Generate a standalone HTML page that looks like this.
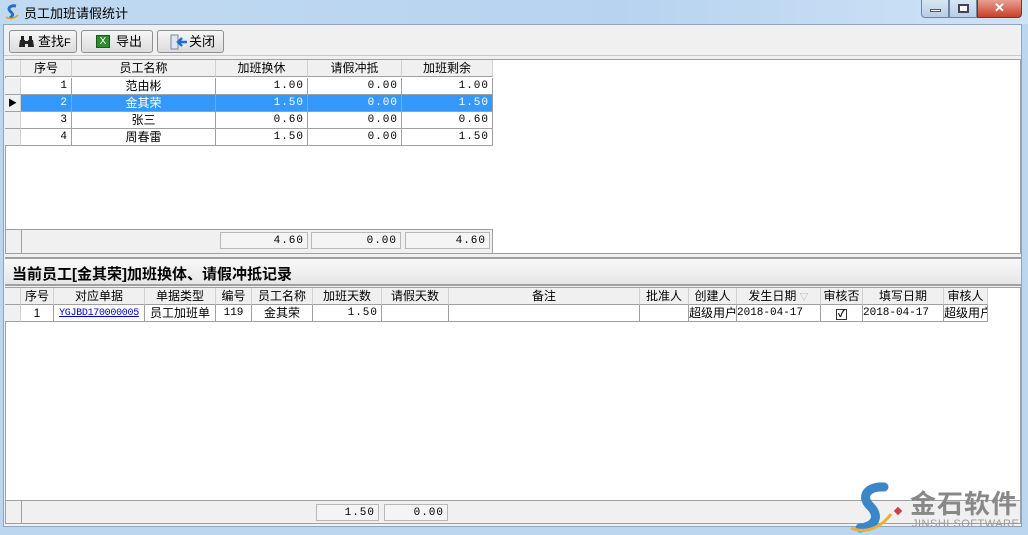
<!DOCTYPE html>
<html><head><meta charset="utf-8"><style>
*{margin:0;padding:0;box-sizing:border-box}
body{width:1028px;height:535px;overflow:hidden;background:#bcd6ef;font-family:"Liberation Sans","Noto Sans CJK SC",sans-serif;font-size:12px;color:#000;position:relative}
.a{position:absolute}
.title{left:0;top:0;width:1028px;height:24px;background:linear-gradient(90deg,#c1daf2,#b7d3f0 60%,#cfe3f6)}
.client{left:3px;top:24px;width:1019px;height:503px;background:#f0f0f0;border:1px solid #8ba6c3}
.btn{height:23px;top:30px;border:1px solid #8f8f8f;border-radius:3px;background:linear-gradient(#f6f6f6,#dcdcdc);font-size:13px;line-height:21px}
.grid{background:#fff;border:1px solid #a0a0a0}
.c{position:absolute;height:17px;line-height:17px;border-right:1px solid #a0a0a0;border-bottom:1px solid #a0a0a0;text-align:center;overflow:hidden;white-space:nowrap;font-size:12px}
.h{background:#f0f0f0;border-right:1px solid #d0d0d0;border-bottom:1px solid #a0a0a0}
.r{text-align:right;padding-right:3px;font-family:"Liberation Mono",monospace;font-size:11px;letter-spacing:1px}
.sel{background:#3399ff;color:#fff}
.box{position:absolute;height:17px;border:1px solid #b8b8b8;background:#f4f4f4;text-align:right;padding-right:3px;line-height:16px;font-family:"Liberation Mono",monospace;font-size:11px;letter-spacing:1px}
.m{font-family:"Liberation Mono",monospace;font-size:11px}
</style></head><body>
<div class="a title"></div>
<svg class="a" style="left:4px;top:4px" width="16" height="16"><path d="M12 2C7 1 3 4 6 7s4 4 0 7" stroke="#2a6fc0" stroke-width="3" fill="none"/><path d="M2 13c4 3 9 1 12-2" stroke="#e0a020" stroke-width="1.5" fill="none"/></svg>
<div class="a" style="left:24px;top:3px;font-size:13px">员工加班请假统计</div>
<div class="a" style="left:921px;top:0;width:28px;height:18px;border:1px solid #6d84a0;border-top:none;border-radius:0 0 0 4px;background:linear-gradient(#d8e6f4,#b7cde4)"><div class="a" style="left:8px;top:9px;width:11px;height:3px;background:#fff;border:1px solid #556"></div></div>
<div class="a" style="left:949px;top:0;width:28px;height:18px;border:1px solid #6d84a0;border-top:none;background:linear-gradient(#d8e6f4,#b7cde4)"><div class="a" style="left:8px;top:4px;width:11px;height:9px;border:2px solid #445;background:#fff"></div></div>
<div class="a" style="left:977px;top:0;width:45px;height:18px;border:1px solid #7a3030;border-top:none;border-radius:0 0 4px 0;background:linear-gradient(#e8a090,#c8402a);color:#fff;font-weight:bold;text-align:center;font-size:13px;line-height:16px">✕</div>
<div class="a client"></div>
<div class="a" style="left:4px;top:25px;width:1017px;height:31px;background:#f0f0f0;border-bottom:1px solid #c8c8c8"></div>
<div class="a btn" style="left:9px;width:68px"><svg style="position:absolute;left:8px;top:4px" width="17" height="13"><path d="M2 5h5v7H1zM10 5h5l1 7h-6zM3 1h3v4H3zM11 1h3v4h-3zM7 6h3v3H7z" fill="#222"/></svg><span style="position:absolute;left:28px">查找<span style="font-size:11px">F</span></span></div>
<div class="a btn" style="left:81px;width:72px"><span style="position:absolute;left:14px;top:4px;width:14px;height:13px;background:#2e8b2e;border:1px solid #1a5a1a;color:#fff;font-size:10px;line-height:11px;text-align:center">X</span><span style="position:absolute;left:34px">导出</span></div>
<div class="a btn" style="left:157px;width:67px"><svg style="position:absolute;left:12px;top:3px" width="18" height="16"><path d="M1 1h7v14H1z" fill="#dfe6f0" stroke="#789"/><path d="M8 8h9M12 4l-4 4 4 4" stroke="#1a70d0" stroke-width="2.5" fill="none"/></svg><span style="position:absolute;left:31px">关闭</span></div>

<div class="a grid" style="left:5px;top:59px;width:1016px;height:195px"></div>
<div style="position:absolute;left:5px;top:60px">
<div class="c h" style="left:0;top:0;width:16px"></div>
<div class="c h" style="left:16px;top:0;width:51px">序号</div>
<div class="c h" style="left:67px;top:0;width:144px">员工名称</div>
<div class="c h" style="left:211px;top:0;width:92px">加班换休</div>
<div class="c h" style="left:303px;top:0;width:94px">请假冲抵</div>
<div class="c h" style="left:397px;top:0;width:91px">加班剩余</div>
</div>
<div style="position:absolute;left:5px;top:78px">
<div class="c h" style="left:0;top:0;width:16px"></div><div class="c r" style="left:16px;top:0;width:51px">1</div><div class="c" style="left:67px;top:0;width:144px">范由彬</div><div class="c r" style="left:211px;top:0;width:92px">1.00</div><div class="c r" style="left:303px;top:0;width:94px">0.00</div><div class="c r" style="left:397px;top:0;width:91px">1.00</div>
<div class="c h" style="left:0;top:17px;width:16px;font-size:9px">▶</div><div class="c r sel" style="left:16px;top:17px;width:51px">2</div><div class="c sel" style="left:67px;top:17px;width:144px">金其荣</div><div class="c r sel" style="left:211px;top:17px;width:92px">1.50</div><div class="c r sel" style="left:303px;top:17px;width:94px">0.00</div><div class="c r sel" style="left:397px;top:17px;width:91px">1.50</div>
<div class="c h" style="left:0;top:34px;width:16px"></div><div class="c r" style="left:16px;top:34px;width:51px">3</div><div class="c" style="left:67px;top:34px;width:144px">张三</div><div class="c r" style="left:211px;top:34px;width:92px">0.60</div><div class="c r" style="left:303px;top:34px;width:94px">0.00</div><div class="c r" style="left:397px;top:34px;width:91px">0.60</div>
<div class="c h" style="left:0;top:51px;width:16px"></div><div class="c r" style="left:16px;top:51px;width:51px">4</div><div class="c" style="left:67px;top:51px;width:144px">周春雷</div><div class="c r" style="left:211px;top:51px;width:92px">1.50</div><div class="c r" style="left:303px;top:51px;width:94px">0.00</div><div class="c r" style="left:397px;top:51px;width:91px">1.50</div>
</div>
<div class="a" style="left:6px;top:229px;width:487px;height:24px;background:#f0f0f0;border-top:1px solid #a0a0a0;border-right:1px solid #a0a0a0"></div>
<div class="a" style="left:21px;top:229px;width:1px;height:24px;background:#a0a0a0"></div>
<div class="box" style="left:220px;top:232px;width:88px">4.60</div>
<div class="box" style="left:311px;top:232px;width:90px">0.00</div>
<div class="box" style="left:405px;top:232px;width:85px">4.60</div>

<div class="a" style="left:5px;top:257px;width:1016px;height:29px;background:linear-gradient(#f8f8f8,#e6e6e6);border-top:2px solid #a0a0a0;border-bottom:2px solid #a0a0a0"></div>
<div class="a" style="left:12px;top:263px;font-size:15px;font-weight:bold">当前员工[金其荣]加班换体、请假冲抵记录</div>

<div class="a grid" style="left:5px;top:287px;width:1016px;height:237px"></div>
<div style="position:absolute;left:5px;top:288px">
<div class="c h" style="left:0;top:0;width:16px"></div>
<div class="c h" style="left:16px;top:0;width:33px">序号</div>
<div class="c h" style="left:49px;top:0;width:91px">对应单据</div>
<div class="c h" style="left:140px;top:0;width:71px">单据类型</div>
<div class="c h" style="left:211px;top:0;width:36px">编号</div>
<div class="c h" style="left:247px;top:0;width:61px">员工名称</div>
<div class="c h" style="left:308px;top:0;width:69px">加班天数</div>
<div class="c h" style="left:377px;top:0;width:67px">请假天数</div>
<div class="c h" style="left:444px;top:0;width:191px">备注</div>
<div class="c h" style="left:635px;top:0;width:49px">批准人</div>
<div class="c h" style="left:684px;top:0;width:48px">创建人</div>
<div class="c h" style="left:732px;top:0;width:84px">发生日期 <span style="color:#aaa;font-size:9px">▽</span></div>
<div class="c h" style="left:816px;top:0;width:42px">审核否</div>
<div class="c h" style="left:858px;top:0;width:81px">填写日期</div>
<div class="c h" style="left:939px;top:0;width:44px">审核人</div>
</div>
<div style="position:absolute;left:5px;top:305px">
<div class="c h" style="left:0;top:0;width:16px"></div>
<div class="c" style="left:16px;top:0;width:33px">1</div>
<div class="c m" style="left:49px;top:0;width:91px;color:#00c;text-decoration:underline;font-size:10px;letter-spacing:-0.3px">YGJBD170000005</div>
<div class="c" style="left:140px;top:0;width:71px">员工加班单</div>
<div class="c m" style="left:211px;top:0;width:36px">119</div>
<div class="c" style="left:247px;top:0;width:61px">金其荣</div>
<div class="c r" style="left:308px;top:0;width:69px">1.50</div>
<div class="c" style="left:377px;top:0;width:67px"></div>
<div class="c" style="left:444px;top:0;width:191px"></div>
<div class="c" style="left:635px;top:0;width:49px"></div>
<div class="c" style="left:684px;top:0;width:48px;text-align:left">超级用户</div>
<div class="c m" style="left:732px;top:0;width:84px;text-align:left">2018-04-17</div>
<div class="c" style="left:816px;top:0;width:42px"><span style="display:inline-block;width:11px;height:11px;border:1px solid #333;font-size:10px;line-height:9px;margin-top:3px;font-weight:bold">✓</span></div>
<div class="c m" style="left:858px;top:0;width:81px;text-align:left">2018-04-17</div>
<div class="c" style="left:939px;top:0;width:44px;text-align:left">超级用户</div>
</div>
<div class="a" style="left:6px;top:500px;width:1014px;height:23px;background:#f0f0f0;border-top:1px solid #a0a0a0"></div>
<div class="a" style="left:21px;top:500px;width:1px;height:23px;background:#a0a0a0"></div>
<div class="box" style="left:316px;top:504px;width:63px">1.50</div>
<div class="box" style="left:384px;top:504px;width:64px">0.00</div>

<svg class="a" style="left:848px;top:482px" width="60" height="53"><path d="M36 5C20 4 12 14 22 24s6 20-10 22" stroke="#3a86c8" stroke-width="9" fill="none" stroke-linecap="round"/><path d="M3 46c14 6 30 0 40-14" stroke="#e8b040" stroke-width="3" fill="none"/><rect x="47" y="26" width="6" height="6" fill="#d04040" transform="rotate(45 50 29)"/></svg>
<div class="a" style="left:910px;top:484px;font-size:26px;font-weight:bold;color:#888;letter-spacing:1px">金石软件</div>
<div class="a" style="left:912px;top:518px;font-size:11px;color:#999;letter-spacing:0.5px">JINSHI SOFTWARE</div>
</body></html>
